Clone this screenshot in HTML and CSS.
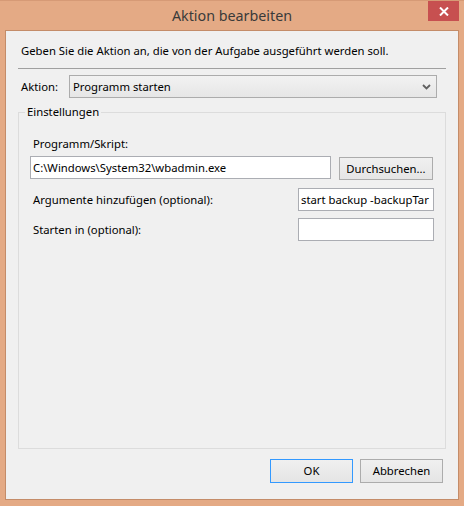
FILE: index.html
```html
<!DOCTYPE html>
<html lang="de">
<head>
<meta charset="utf-8">
<title>Aktion bearbeiten</title>
<link rel="stylesheet" href="styles.css">
</head>
<body>
<div class="window">
  <div class="titlebar">
    <div class="title">Aktion bearbeiten</div>
    <div class="close">
      <svg width="10" height="9" viewBox="0 0 10 9"><path d="M1 0.5 L9 8.5 M9 0.5 L1 8.5" stroke="#fff" stroke-width="2"/></svg>
    </div>
  </div>
  <div class="client">
    <div class="intro">Geben Sie die Aktion an, die von der Aufgabe ausgeführt werden soll.</div>
    <div class="sep"></div>
    <div class="action-row">
      <span class="action-label">Aktion:</span>
      <div class="select">
        <span>Programm starten</span>
        <svg class="chev" width="9" height="6" viewBox="0 0 9 6"><path d="M1 1 L4.5 4.5 L8 1" stroke="#606060" stroke-width="1.8" fill="none"/></svg>
      </div>
    </div>
    <div class="group">
      <div class="legend">Einstellungen</div>
      <div class="field-label">Programm/Skript:</div>
      <div class="row row-prog">
        <div class="textbox prog"><span>C:\Windows\System32\wbadmin.exe</span></div>
        <div class="btn browse">Durchsuchen...</div>
      </div>
      <div class="row row-args">
        <span class="row-label">Argumente hinzufügen (optional):</span>
        <div class="textbox small"><span>start backup -backupTar</span></div>
      </div>
      <div class="row row-start">
        <span class="row-label">Starten in (optional):</span>
        <div class="textbox small"></div>
      </div>
    </div>
    <div class="footer">
      <div class="btn default">OK</div>
      <div class="btn">Abbrechen</div>
    </div>
  </div>
</div>
</body>
</html>
```
FILE: styles.css
```css
* { box-sizing: border-box; }
html, body { margin: 0; padding: 0; }
body {
  width: 464px;
  height: 506px;
  background: #e4aa85;
  font-family: "Noto Sans", "Open Sans", sans-serif;
  font-size: 11.3px;
  color: #000;
  overflow: hidden;
}
.window {
  width: 464px;
  height: 506px;
  display: flex;
  flex-direction: column;
  background: #e4aa85;
  border-top: 1px solid #d69a76;
}
.titlebar {
  height: 29px;
  display: grid;
  grid-template-columns: 1fr auto 1fr;
}
.title {
  grid-column: 2;
  font-size: 14.3px;
  line-height: 20px;
  padding-top: 5px;
  color: #3a3a3a;
}
.close {
  grid-column: 3;
  justify-self: end;
  align-self: start;
  width: 31px;
  height: 20px;
  margin-right: 5px;
  background: #c75050;
  display: flex;
  align-items: center;
  justify-content: center;
}
.client {
  margin: 0 5px 6px 5px;
  height: 470px;
  border: 1px solid #c48c69;
  background: #f0f0f0;
  display: flex;
  flex-direction: column;
}
.intro {
  margin: 12px 0 0 15px;
  line-height: 16px;
  white-space: nowrap;
}
.sep {
  margin: 9px 12px 0;
  height: 1px;
  background: #a0a0a0;
}
.action-row {
  margin-top: 6px;
  padding-left: 15px;
  display: flex;
  align-items: center;
}
.action-label {
  width: 48px;
  line-height: 16px;
}
.select {
  width: 368px;
  height: 23px;
  border: 1px solid #acacac;
  background: linear-gradient(#f2f2f2, #e6e6e6);
  display: flex;
  align-items: center;
  justify-content: space-between;
  padding: 0 5px 0 3px;
  line-height: 16px;
}
.chev { margin-top: 1px; }
.group {
  margin: 14px 12px 0;
  height: 337px;
  border: 1px solid #dcdcdc;
  display: flex;
  flex-direction: column;
}
.legend {
  align-self: flex-start;
  margin: -9px 0 0 6px;
  padding: 0 2px;
  background: #f0f0f0;
  line-height: 16px;
}
.field-label {
  margin: 16px 0 0 14px;
  line-height: 16px;
}
.row {
  display: flex;
  align-items: center;
  padding: 0 11px;
}
.row-prog { margin-top: 4px; align-items: flex-start; }
.row-args { margin-top: 8px; }
.row-start { margin-top: 7px; }
.row-label {
  flex: 1;
  padding-left: 3px;
  line-height: 16px;
}
.textbox {
  height: 23px;
  border: 1px solid #abadb3;
  background: #fff;
  padding: 0 0 0 2px;
  display: flex;
  align-items: center;
  white-space: nowrap;
  overflow: hidden;
  line-height: 16px;
}
.prog { width: 301px; }
.small { width: 136px; }
.btn {
  height: 23px;
  border: 1px solid #acacac;
  background: linear-gradient(#f0f0f0, #e5e5e5);
  display: flex;
  align-items: center;
  justify-content: center;
  line-height: 16px;
}
.browse {
  width: 94px;
  margin-left: 8px;
  margin-top: 1px;
}
.footer {
  margin: 10px 15px 0 0;
  display: flex;
  justify-content: flex-end;
  gap: 7px;
}
.footer .btn {
  width: 83px;
  height: 24px;
}
.footer .default {
  border-color: #3399ff;
}
```
